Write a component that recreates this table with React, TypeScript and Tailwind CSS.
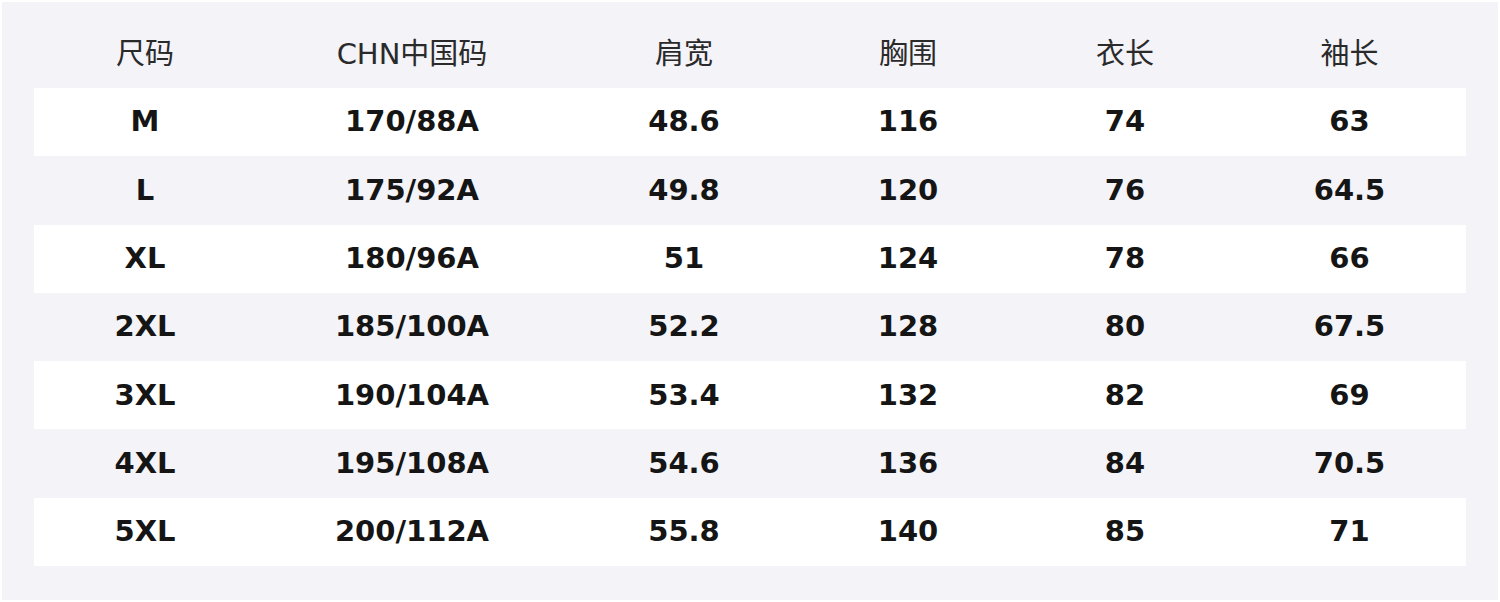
import React from 'react'

const headers = ['尺码', 'CHN中国码', '肩宽', '胸围', '衣长', '袖长']

const rows: string[][] = [
  ['M', '170/88A', '48.6', '116', '74', '63'],
  ['L', '175/92A', '49.8', '120', '76', '64.5'],
  ['XL', '180/96A', '51', '124', '78', '66'],
  ['2XL', '185/100A', '52.2', '128', '80', '67.5'],
  ['3XL', '190/104A', '53.4', '132', '82', '69'],
  ['4XL', '195/108A', '54.6', '136', '84', '70.5'],
  ['5XL', '200/112A', '55.8', '140', '85', '71'],
]

const cols = 'grid grid-cols-[222px_312px_232px_216px_218px_231px]'

export default function App() {
  return (
    <div className="w-[1500px] h-[602px] bg-white p-[2px] font-['DejaVu_Sans','Noto_Sans_CJK_SC',sans-serif]">
      <div className="h-full bg-[#f3f3f8] px-[32px] pt-[20px]">
        {/* header */}
        <div className={`${cols} h-[66px] items-center text-[29px] text-[#2a2a2a]`}>
          {headers.map(h => (
            <div key={h} className="text-center">{h}</div>
          ))}
        </div>

        {/* body rows, striped white / grey */}
        {rows.map((r, i) => (
          <div
            key={r[0]}
            className={`${cols} h-[68.3px] items-center text-[29px] font-bold text-[#151515] ${
              i % 2 === 0 ? 'bg-white' : ''
            }`}
          >
            {r.map((c, j) => (
              <div key={j} className="text-center">{c}</div>
            ))}
          </div>
        ))}
      </div>
    </div>
  )
}
